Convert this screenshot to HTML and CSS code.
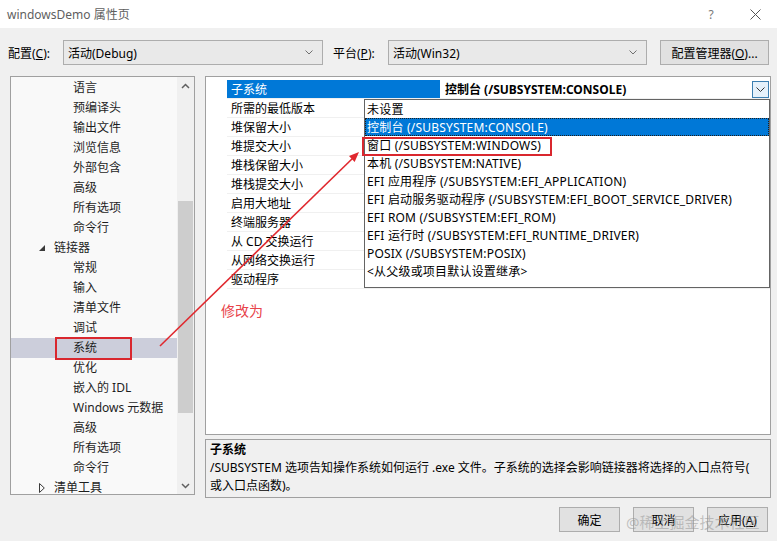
FILE: index.html
```html
<!DOCTYPE html>
<html lang="zh-CN">
<head>
    <meta charset="UTF-8">
    <title>windowsDemo 属性页</title>
    <link rel="stylesheet" href="styles.css">
</head>
<body>
    <div class="titlebar">
        <span class="title">windowsDemo 属性页</span>
        <span class="caption-btn help">?</span>
        <span class="caption-btn">
            <svg width="11" height="11" viewBox="0 0 11 11"><path d="M0.5 0.5 L10.5 10.5 M10.5 0.5 L0.5 10.5" stroke="#555" stroke-width="1" fill="none"/></svg>
        </span>
    </div>

    <div class="toolbar">
        <span class="label">配置(<u>C</u>):</span>
        <div class="combo combo-config">
            <span>活动(Debug)</span>
            <svg width="8" height="5" viewBox="0 0 8 5"><polyline points="0.5,0.5 4,4 7.5,0.5" stroke="#707070" fill="none"/></svg>
        </div>
        <span class="label">平台(<u>P</u>):</span>
        <div class="combo combo-platform">
            <span>活动(Win32)</span>
            <svg width="8" height="5" viewBox="0 0 8 5"><polyline points="0.5,0.5 4,4 7.5,0.5" stroke="#707070" fill="none"/></svg>
        </div>
        <button class="btn btn-manager">配置管理器(<u>O</u>)...</button>
    </div>

    <div class="main">
        <div class="tree">
            <div class="tree-list">
                <div class="node">语言</div>
                <div class="node">预编译头</div>
                <div class="node">输出文件</div>
                <div class="node">浏览信息</div>
                <div class="node">外部包含</div>
                <div class="node">高级</div>
                <div class="node">所有选项</div>
                <div class="node">命令行</div>
                <div class="node branch">
                    <svg class="twisty" width="6" height="6" viewBox="0 0 6 6"><polygon points="6,0 6,6 0,6" fill="#3a3a3a"/></svg>
                    <span>链接器</span>
                </div>
                <div class="node">常规</div>
                <div class="node">输入</div>
                <div class="node">清单文件</div>
                <div class="node">调试</div>
                <div class="node selected">系统</div>
                <div class="node">优化</div>
                <div class="node">嵌入的 IDL</div>
                <div class="node">Windows 元数据</div>
                <div class="node">高级</div>
                <div class="node">所有选项</div>
                <div class="node">命令行</div>
                <div class="node branch">
                    <svg class="twisty" width="6" height="10" viewBox="0 0 6 10"><polygon points="0.5,0.5 5.3,5 0.5,9.5" fill="none" stroke="#3a3a3a"/></svg>
                    <span>清单工具</span>
                </div>
            </div>
            <div class="vscroll">
                <div class="sb-btn">
                    <svg width="9" height="6" viewBox="0 0 9 6"><polyline points="1,5 4.5,1.5 8,5" stroke="#606060" stroke-width="1.5" fill="none"/></svg>
                </div>
                <div class="sb-track"><div class="sb-thumb"></div></div>
                <div class="sb-btn">
                    <svg width="9" height="6" viewBox="0 0 9 6"><polyline points="1,1 4.5,4.5 8,1" stroke="#606060" stroke-width="1.5" fill="none"/></svg>
                </div>
            </div>
        </div>

        <div class="right">
            <div class="grid">
                <div class="row current">
                    <div class="name">子系统</div>
                    <div class="value">
                        <span>控制台 (/SUBSYSTEM:CONSOLE)</span>
                        <span class="drop-btn">
                            <svg width="9" height="5" viewBox="0 0 9 5"><polyline points="0.5,0.5 4.5,4.5 8.5,0.5" stroke="#333" fill="none"/></svg>
                        </span>
                    </div>
                </div>
                <div class="row"><div class="name">所需的最低版本</div><div class="value"></div></div>
                <div class="row"><div class="name">堆保留大小</div><div class="value"></div></div>
                <div class="row"><div class="name">堆提交大小</div><div class="value"></div></div>
                <div class="row"><div class="name">堆栈保留大小</div><div class="value"></div></div>
                <div class="row"><div class="name">堆栈提交大小</div><div class="value"></div></div>
                <div class="row"><div class="name">启用大地址</div><div class="value"></div></div>
                <div class="row"><div class="name">终端服务器</div><div class="value"></div></div>
                <div class="row"><div class="name">从 CD 交换运行</div><div class="value"></div></div>
                <div class="row"><div class="name">从网络交换运行</div><div class="value"></div></div>
                <div class="row"><div class="name">驱动程序</div><div class="value"></div></div>

                <div class="dropdown">
                    <div class="option">未设置</div>
                    <div class="option selected">控制台 (/SUBSYSTEM:CONSOLE)</div>
                    <div class="option">窗口 (/SUBSYSTEM:WINDOWS)</div>
                    <div class="option">本机 (/SUBSYSTEM:NATIVE)</div>
                    <div class="option">EFI 应用程序 (/SUBSYSTEM:EFI_APPLICATION)</div>
                    <div class="option">EFI 启动服务驱动程序 (/SUBSYSTEM:EFI_BOOT_SERVICE_DRIVER)</div>
                    <div class="option">EFI ROM (/SUBSYSTEM:EFI_ROM)</div>
                    <div class="option">EFI 运行时 (/SUBSYSTEM:EFI_RUNTIME_DRIVER)</div>
                    <div class="option">POSIX (/SUBSYSTEM:POSIX)</div>
                    <div class="option">&lt;从父级或项目默认设置继承&gt;</div>
                </div>
            </div>

            <div class="desc">
                <div class="desc-title">子系统</div>
                <div>/SUBSYSTEM 选项告知操作系统如何运行 .exe 文件。子系统的选择会影响链接器将选择的入口点符号(<br>或入口点函数)。</div>
            </div>
        </div>
    </div>

    <div class="footer">
        <button class="btn btn-footer">确定</button>
        <button class="btn btn-footer">取消</button>
        <button class="btn btn-footer">应用(<u>A</u>)</button>
    </div>

    <!-- annotations drawn over the screenshot -->
    <svg class="annot" width="777" height="541" viewBox="0 0 777 541">
        <line x1="160" y1="346" x2="354" y2="157" stroke="#e0282e" stroke-width="1.6"/>
        <polygon points="359,152 354.6,161.9 349,156.1" fill="#e0282e"/>
    </svg>
    <div class="mark mark-tree"></div>
    <div class="mark mark-option"></div>
    <span class="note">修改为</span>
    <span class="watermark">@稀土掘金技术社区</span>
</body>
</html>
```

FILE: styles.css
```css
body {
    margin: 0;
    width: 777px;
    height: 541px;
    position: relative;
    overflow: hidden;
    background-color: #f0f0f0;
    font-family: "Noto Sans", "Noto Sans CJK SC", sans-serif;
    font-size: 12px;
    color: #000;
}

.titlebar {
    height: 28px;
    background-color: #fff;
    display: flex;
    align-items: center;
    padding-left: 7px;
}

.title {
    flex: 1;
    color: #5f5f5f;
}

.caption-btn {
    width: 44px;
    height: 28px;
    display: flex;
    align-items: center;
    justify-content: center;
}

.caption-btn.help {
    color: #777;
    font-size: 12px;
}

.toolbar {
    display: flex;
    align-items: center;
    height: 25px;
    padding: 12px 8px 0;
}

.label {
    width: 55px;
}

.combo {
    height: 25px;
    box-sizing: border-box;
    border: 1px solid #adadad;
    background-color: #e9e9e9;
    display: flex;
    align-items: center;
    justify-content: space-between;
    padding: 0 9px 0 4px;
}

.combo-config {
    width: 260px;
    margin-right: 10px;
}

.combo-platform {
    width: 259px;
    margin-right: 13px;
}

.btn {
    height: 25px;
    box-sizing: border-box;
    border: 1px solid #adadad;
    background-color: #e1e1e1;
    font: inherit;
    color: #000;
    padding: 0;
}

.btn-manager {
    width: 109px;
}

.main {
    display: flex;
    align-items: flex-start;
    gap: 10px;
    padding: 11px 0 0 10px;
}

/* left tree */
.tree {
    width: 185px;
    height: 419px;
    box-sizing: border-box;
    border: 1px solid #a0a0a0;
    background-color: #f9f9f9;
    display: flex;
    overflow: hidden;
}

.tree-list {
    flex: 1;
    padding-top: 1px;
    color: #1e1e1e;
}

.node {
    height: 20px;
    line-height: 20px;
    padding-left: 62px;
    white-space: nowrap;
}

.node.branch {
    display: flex;
    align-items: center;
    padding-left: 28px;
}

.node.branch .twisty {
    margin-right: 9px;
}

.node.selected {
    background-color: #cccedb;
}

.vscroll {
    width: 17px;
    background-color: #f0f0f0;
    display: flex;
    flex-direction: column;
}

.sb-btn {
    height: 17px;
    display: flex;
    align-items: center;
    justify-content: center;
}

.sb-track {
    flex: 1;
}

.sb-thumb {
    margin: 107px 1px 0;
    height: 212px;
    background-color: #cdcdcd;
}

/* right side */
.right {
    width: 566px;
    display: flex;
    flex-direction: column;
    gap: 4px;
}

.grid {
    height: 359px;
    box-sizing: border-box;
    border: 1px solid #a0a0a0;
    background-color: #fff;
    position: relative;
    padding: 3px 0 0 21px;
}

.row {
    display: flex;
    height: 19px;
    box-sizing: border-box;
    border-bottom: 1px solid #f0f0f0;
    line-height: 19px;
}

.row .name {
    width: 213px;
    box-sizing: border-box;
    padding-left: 4px;
    white-space: nowrap;
}

.row .value {
    flex: 1;
    padding-left: 5px;
}

.row.current .name {
    background-color: #0078d7;
    color: #fff;
}

.row.current .value {
    display: flex;
    align-items: center;
    justify-content: space-between;
    font-weight: bold;
}

.drop-btn {
    width: 17px;
    height: 17px;
    box-sizing: border-box;
    margin-right: 1px;
    border: 1px solid #3c7fb1;
    background-color: #e5f1fb;
    display: flex;
    align-items: center;
    justify-content: center;
}

.dropdown {
    position: absolute;
    left: 158px;
    top: 22px;
    width: 406px;
    height: 189px;
    box-sizing: border-box;
    border: 1px solid #646464;
    background-color: #fff;
    letter-spacing: 0.2px;
}

.option {
    height: 18px;
    line-height: 20px;
    padding-left: 2px;
    white-space: nowrap;
    box-sizing: border-box;
}

.option.selected {
    background-color: #0078d7;
    color: #fff;
    border: 1px dotted #1e1e1e;
    line-height: 17px;
    padding-left: 1px;
}

.desc {
    height: 59px;
    box-sizing: border-box;
    border: 1px solid #a0a0a0;
    padding: 1px 5px 0 4px;
    line-height: 18px;
}

.desc-title {
    font-weight: bold;
}

.footer {
    display: flex;
    justify-content: flex-end;
    gap: 13px;
    padding: 9px 9px 0 0;
}

.btn-footer {
    width: 61px;
}

/* red annotations */
.annot {
    position: absolute;
    left: 0;
    top: 0;
    pointer-events: none;
}

.mark {
    position: absolute;
    border: 2px solid #d9272e;
    box-sizing: border-box;
}

.mark-tree {
    left: 55px;
    top: 337px;
    width: 77px;
    height: 23px;
}

.mark-option {
    left: 362px;
    top: 137px;
    width: 190px;
    height: 19px;
}

.note {
    position: absolute;
    left: 221px;
    top: 300px;
    font-size: 14px;
    color: #e8434a;
}

.watermark {
    position: absolute;
    left: 626px;
    top: 511px;
    font-size: 15px;
    color: rgba(150, 150, 150, 0.55);
    white-space: nowrap;
}
```
